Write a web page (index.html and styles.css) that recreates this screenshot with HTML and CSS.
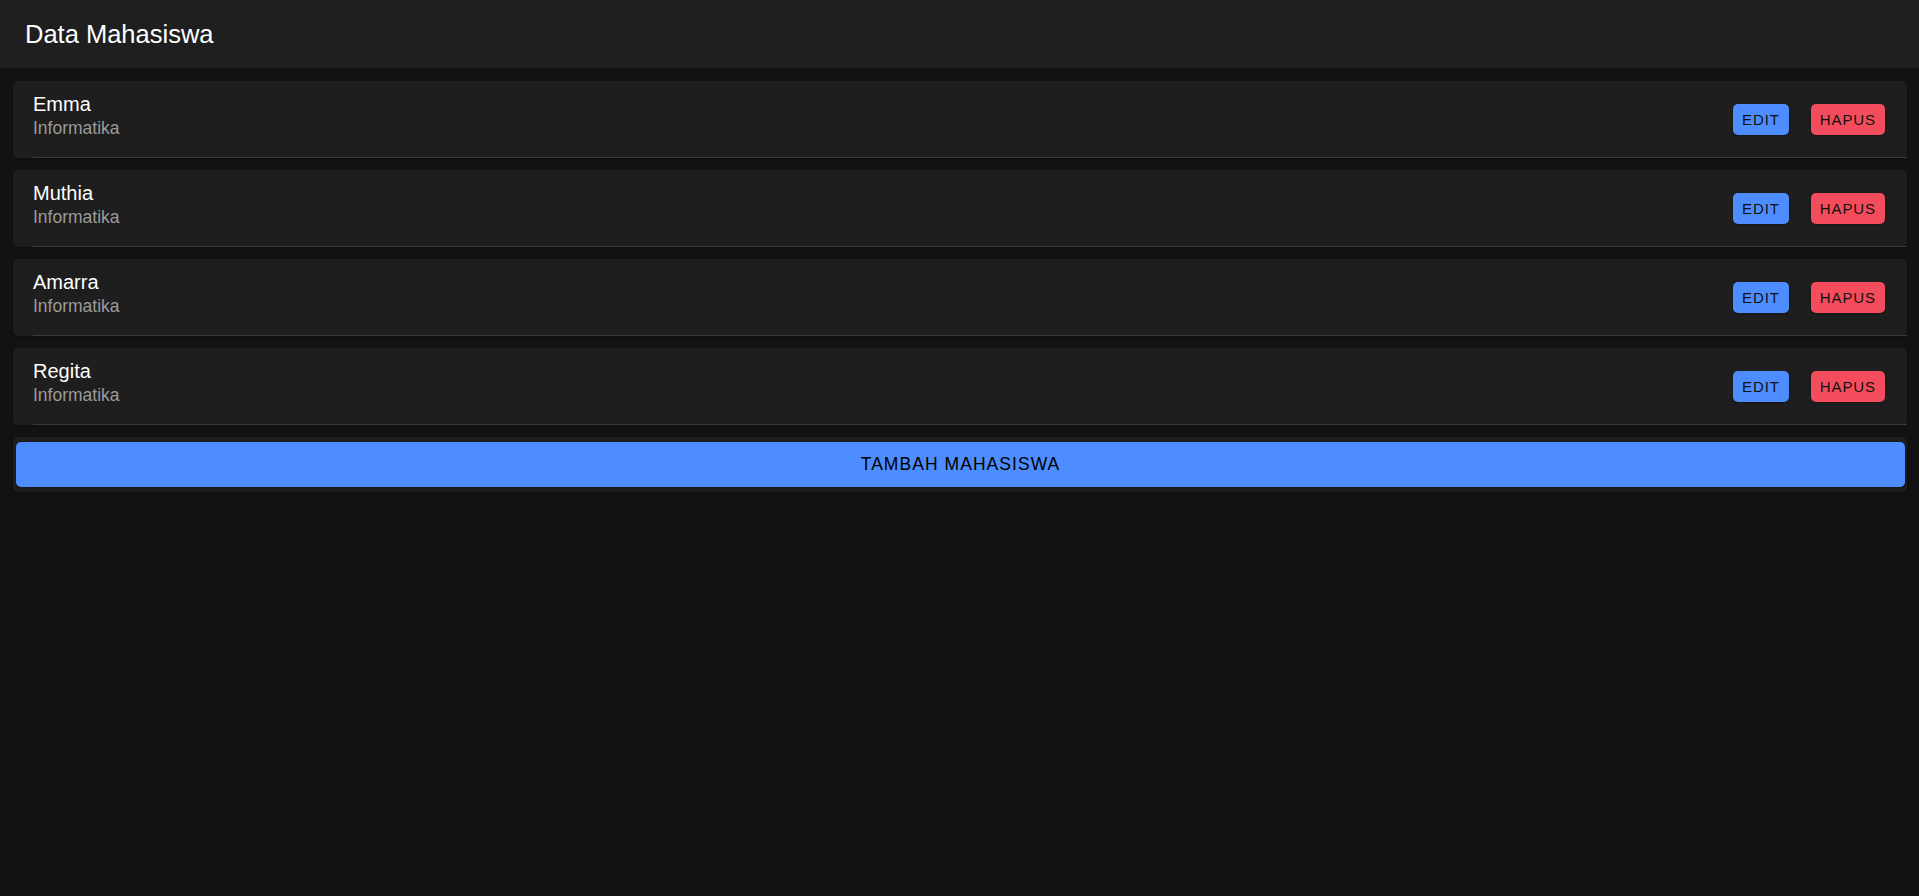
FILE: index.html
```html
<!DOCTYPE html>
<html lang="id">
<head>
<meta charset="utf-8">
<title>Data Mahasiswa</title>
<link rel="stylesheet" href="styles.css">
</head>
<body>
<header class="toolbar">
  <h1 class="title">Data Mahasiswa</h1>
</header>
<main class="content">
  <div class="card">
    <div class="item">
      <div class="label">
        <div class="name">Emma</div>
        <div class="sub">Informatika</div>
      </div>
      <div class="actions">
        <button class="btn btn-primary">Edit</button>
        <button class="btn btn-danger">Hapus</button>
      </div>
    </div>
  </div>
  <div class="card">
    <div class="item">
      <div class="label">
        <div class="name">Muthia</div>
        <div class="sub">Informatika</div>
      </div>
      <div class="actions">
        <button class="btn btn-primary">Edit</button>
        <button class="btn btn-danger">Hapus</button>
      </div>
    </div>
  </div>
  <div class="card">
    <div class="item">
      <div class="label">
        <div class="name">Amarra</div>
        <div class="sub">Informatika</div>
      </div>
      <div class="actions">
        <button class="btn btn-primary">Edit</button>
        <button class="btn btn-danger">Hapus</button>
      </div>
    </div>
  </div>
  <div class="card">
    <div class="item">
      <div class="label">
        <div class="name">Regita</div>
        <div class="sub">Informatika</div>
      </div>
      <div class="actions">
        <button class="btn btn-primary">Edit</button>
        <button class="btn btn-danger">Hapus</button>
      </div>
    </div>
  </div>
  <div class="card card-add">
    <button class="btn-add">Tambah Mahasiswa</button>
  </div>
</main>
</body>
</html>
```
FILE: styles.css
```css
* { box-sizing: border-box; }

html, body {
  margin: 0;
  padding: 0;
  background: #121212;
  font-family: "Liberation Sans", Arial, sans-serif;
  color: #ffffff;
}

.toolbar {
  height: 68px;
  background: #1f1f1f;
  display: flex;
  align-items: center;
  padding-left: 25px;
}

.title {
  margin: 0;
  font-size: 25.5px;
  font-weight: 400;
  color: #ffffff;
  letter-spacing: 0;
}

.content {
  padding: 13px 12px 0 13px;
  display: flex;
  flex-direction: column;
  gap: 12px;
}

.card {
  background: #1e1e1e;
  border-radius: 5px;
  box-shadow: 0 1px 2px rgba(0, 0, 0, 0.25);
}

.item {
  display: flex;
  align-items: center;
  margin-left: 20px;
  padding-right: 22px;
  min-height: 77px;
  border-bottom: 1px solid #3a3a3a;
}

.label {
  flex: 1;
  padding: 11px 0 19px;
}

.name {
  font-size: 20px;
  line-height: 24px;
  color: #ffffff;
}

.sub {
  margin-top: 2px;
  font-size: 17.5px;
  line-height: 20px;
  color: #9b9b9b;
}

.actions {
  display: flex;
  gap: 22px;
  align-items: center;
}

.btn {
  height: 31px;
  padding: 0 9px;
  border: 0;
  border-radius: 5px;
  font-family: "Liberation Sans", Arial, sans-serif;
  font-size: 15px;
  font-weight: 400;
  letter-spacing: 0.06em;
  text-transform: uppercase;
  color: #111111;
  cursor: pointer;
  box-shadow: 0 1px 2px rgba(0, 0, 0, 0.3);
}

.btn-primary { background: #4d8dff; }
.btn-danger { background: #f34d5d; }

.card-add {
  padding: 5px 2px 5px 3px;
}

.btn-add {
  display: block;
  width: 100%;
  height: 45px;
  border: 0;
  border-radius: 5px;
  background: #4d8dff;
  color: #000000;
  font-family: "Liberation Sans", Arial, sans-serif;
  font-size: 17.5px;
  font-weight: 400;
  letter-spacing: 0.06em;
  text-transform: uppercase;
  cursor: pointer;
  box-shadow: 0 1px 2px rgba(0, 0, 0, 0.3);
}
```
